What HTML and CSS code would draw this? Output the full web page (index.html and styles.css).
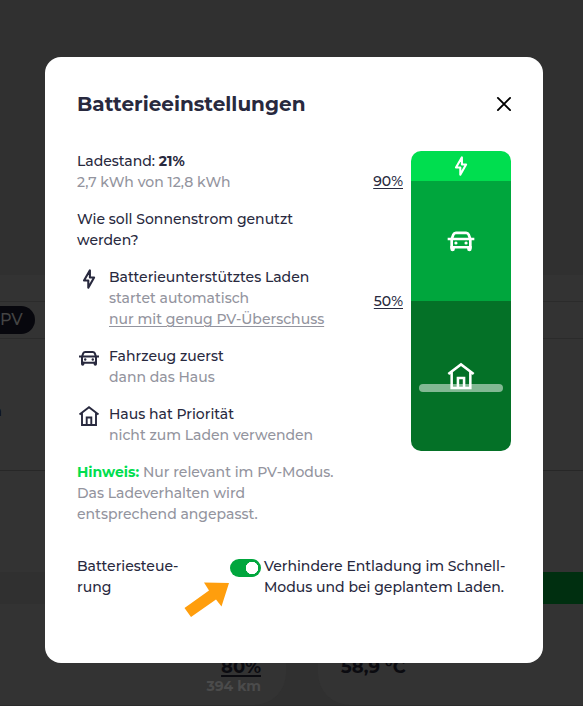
FILE: index.html
```html
<!DOCTYPE html>
<html lang="de">
<head>
<meta charset="utf-8">
<title>Batterieeinstellungen</title>
<link rel="stylesheet" href="styles.css">
</head>
<body>
<svg class="sprite" aria-hidden="true">
  <symbol id="bolt" viewBox="0 0 24 24"><path d="M12.900 3.300v7.200h4.200L11.300 20.700v-7.200H7z" fill="none" stroke="currentColor" stroke-width="2.100" stroke-linejoin="round"/></symbol>
  <symbol id="car" viewBox="0 0 24 24"><path d="M5 10.500 6.300 7.200Q6.800 5.900 8.200 5.900h7.600q1.400 0 1.900 1.300L19 10.500M2 10.500h20M5 10.500v6.200h14v-6.200" fill="none" stroke="currentColor" stroke-width="2"/><path d="M4 15.700h3.400v2.300a1.200 1.200 0 0 1-3.400 0zM16.600 15.700H20v2.300a1.200 1.200 0 0 1-3.400 0z" fill="currentColor"/><circle cx="8.200" cy="13.500" r="1.200" fill="currentColor"/><circle cx="15.800" cy="13.500" r="1.200" fill="currentColor"/></symbol>
  <symbol id="house" viewBox="0 0 24 24"><path d="M2.500 10.500 12 3.300l9.500 7.200M5 9.200V21h14V9.200M9.700 21v-7.500h4.600V21" fill="none" stroke="currentColor" stroke-width="1.900"/></symbol>
</svg>

<div class="page">
  <div class="page-top"></div>
  <div class="mode-row"><span class="mode">PV</span></div>
  <div class="details">n</div>
  <div class="vehicle"></div>
  <div class="progress"><span class="progress-fill"></span></div>
  <div class="cards">
    <div class="card card-left"><b class="limit">80%</b><b class="range">394 km</b></div>
    <div class="card card-right"><b class="temp">58,9 °C</b></div>
  </div>
</div>

<div class="overlay">
  <main class="modal">
    <header class="header">
      <h1>Batterieeinstellungen</h1>
      <svg class="close" viewBox="0 0 16 16"><path d="M2.900 1.900l12.200 12.200M15.100 1.900L2.900 14.100" stroke="#000" stroke-width="1.900" stroke-linecap="round"/></svg>
    </header>
    <div class="content">
      <section class="info">
        <p>Ladestand: <b>21%</b><br><span class="muted">2,7 kWh von 12,8 kWh</span></p>
        <p>Wie soll Sonnenstrom genutzt<br>werden?</p>
        <div class="option"><svg class="icon"><use href="#bolt"/></svg><div>Batterieunterstütztes Laden<br><span class="muted">startet automatisch<br><u>nur mit genug PV-Überschuss</u></span></div></div>
        <div class="option"><svg class="icon"><use href="#car"/></svg><div>Fahrzeug zuerst<br><span class="muted">dann das Haus</span></div></div>
        <div class="option"><svg class="icon"><use href="#house"/></svg><div>Haus hat Priorität<br><span class="muted">nicht zum Laden verwenden</span></div></div>
        <p class="muted"><b class="hint">Hinweis:</b> Nur relevant im PV-Modus.<br>Das Ladeverhalten wird<br>entsprechend angepasst.</p>
      </section>
      <section class="chart">
        <div class="marks"><u class="mark-high">90%</u><u>50%</u></div>
        <div class="battery">
          <div class="zone zone-boost"><svg class="icon"><use href="#bolt"/></svg></div>
          <div class="zone zone-car"><svg class="icon big"><use href="#car"/></svg></div>
          <div class="zone zone-house"><svg class="icon big"><use href="#house"/></svg></div>
          <div class="level"></div>
        </div>
      </section>
    </div>
    <div class="control">
      <div class="control-label">Batteriesteue-<br>rung</div>
      <span class="toggle"></span>
      <div>Verhindere Entladung im Schnell-<br>Modus und bei geplantem Laden.</div>
    </div>
    <svg class="arrow" viewBox="0 0 46 36"><path d="M0.500 27 25 9.500 20 1.500 45 2 37.500 25.500 32 18.500 7 36z" fill="#ff9e0d"/></svg>
  </main>
</div>
</body>
</html>
```
FILE: styles.css
```css
* { box-sizing: border-box; }
body {
  margin: 0;
  height: 706px;
  overflow: hidden;
  background: #333;
  color: #28293e;
  font: 500 14px/21px Montserrat, Inter, sans-serif;
  white-space: nowrap;
}
p, h1 { margin: 0; }
b { font-weight: 700; }
u { text-underline-offset: 2px; text-decoration-thickness: 1px; }
.sprite { display: none; }

.page { height: 706px; display: flex; flex-direction: column; color: #0b0b10; }
.page-top { height: 275px; background: #303030; }
.mode-row { height: 64px; padding-top: 31px; border-bottom: 1px solid #2b2b2b; background: linear-gradient(#2b2b2b, #2b2b2b) 0 26px / 100% 1px no-repeat; }
.mode { display: block; width: 35px; height: 28px; border-radius: 0 14px 14px 0; background: #07070d; color: #444; font-size: 16px; line-height: 27px; }
.details { height: 132px; padding-top: 62px; border-bottom: 1px solid #272727; text-indent: -8px; font-weight: 700; }
.vehicle { height: 101px; }
.progress { height: 32px; background: #303030; display: flex; justify-content: flex-end; }
.progress-fill { width: 60px; background: #002f10; }
.cards { height: 102px; display: flex; gap: 32px; background: #303030; border-bottom: 1px solid #2b2b2b; }
.card { background: #333; display: flex; flex-direction: column; padding-top: 53px; }
.card-left { width: 286px; align-items: flex-end; padding-right: 25px; border-radius: 0 0 32px; }
.card-right { flex: 1; padding-left: 23px; border-radius: 0 0 0 32px; }
.limit, .temp { font-size: 18px; line-height: 21px; }
.limit { text-decoration: underline; text-decoration-thickness: 2px; text-underline-offset: 2px; }
.range { color: #4b4b4b; line-height: 16px; }

.overlay { position: absolute; inset: 0; padding: 57px 40px 43px 45px; }
.modal { position: relative; height: 606px; border-radius: 16px; background: #fff; padding: 32px; }
.header { display: flex; justify-content: space-between; align-items: center; height: 30px; margin-bottom: 32px; }
h1 { font-size: 20px; line-height: 30px; font-weight: 700; }
.close { width: 16px; height: 16px; }
.content { display: flex; justify-content: space-between; height: 374px; margin-bottom: 31px; }
.info { display: flex; flex-direction: column; gap: 16px; }
.muted { color: #93949e; }
.hint { color: #00de4f; }
.option { display: flex; gap: 8px; }
.icon { width: 24px; height: 24px; flex: none; }
.chart { display: flex; gap: 8px; height: 300px; }
.marks { display: flex; flex-direction: column; align-items: flex-end; padding-top: 20px; }
.mark-high { margin-bottom: 99px; }
.battery { position: relative; width: 100px; border-radius: 10px; overflow: hidden; color: #fff; }
.zone { display: flex; justify-content: center; align-items: center; }
.zone-boost { height: 30px; background: #00de4f; }
.zone-car { height: 120px; background: #00a63d; }
.zone-house { height: 150px; background: #047127; }
.big { width: 32px; height: 32px; }
.level { position: absolute; left: 8px; right: 8px; bottom: 59px; height: 8px; border-radius: 4px; background: rgba(255,255,255,.5); }
.control { display: flex; }
.control-label { width: 153px; }
.toggle { width: 31px; height: 18px; margin: 3px 3px 0 0; border-radius: 9px; background: radial-gradient(circle at 22px 9px, #fff 6px, #00a63d 6.500px); }
.arrow { position: absolute; left: 139px; top: 524px; width: 46px; height: 36px; }
```
